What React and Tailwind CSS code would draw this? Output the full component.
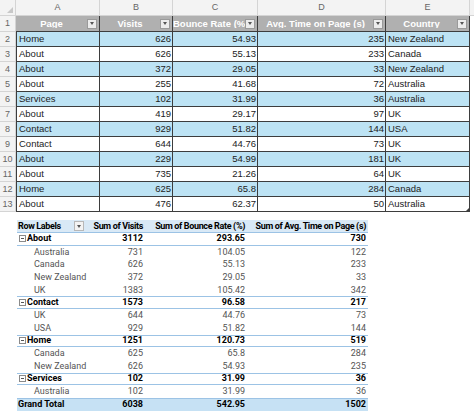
const rows = [
  ["Home", 626, "54.93", 235, "New Zealand"],
  ["About", 626, "55.13", 233, "Canada"],
  ["About", 372, "29.05", 33, "New Zealand"],
  ["About", 255, "41.68", 72, "Australia"],
  ["Services", 102, "31.99", 36, "Australia"],
  ["About", 419, "29.17", 97, "UK"],
  ["Contact", 929, "51.82", 144, "USA"],
  ["Contact", 644, "44.76", 73, "UK"],
  ["About", 229, "54.99", 181, "UK"],
  ["About", 735, "21.26", 64, "UK"],
  ["Home", 625, "65.8", 284, "Canada"],
  ["About", 476, "62.37", 50, "Australia"],
];

const pivot = [
  { label: "About", v: 3112, b: "293.65", t: 730, group: true },
  { label: "Australia", v: 731, b: "104.05", t: 122 },
  { label: "Canada", v: 626, b: "55.13", t: 233 },
  { label: "New Zealand", v: 372, b: "29.05", t: 33 },
  { label: "UK", v: 1383, b: "105.42", t: 342 },
  { label: "Contact", v: 1573, b: "96.58", t: 217, group: true },
  { label: "UK", v: 644, b: "44.76", t: 73 },
  { label: "USA", v: 929, b: "51.82", t: 144 },
  { label: "Home", v: 1251, b: "120.73", t: 519, group: true },
  { label: "Canada", v: 625, b: "65.8", t: 284 },
  { label: "New Zealand", v: 626, b: "54.93", t: 235 },
  { label: "Services", v: 102, b: "31.99", t: 36, group: true },
  { label: "Australia", v: 102, b: "31.99", t: 36 },
];

const cols = "grid grid-cols-[16px_84px_73px_85px_128px_84px_4px]";
const pcols = "grid grid-cols-[68px_60px_102px_121px]";

const Drop = ({ light }) => (
  <span
    className={
      "w-[10px] h-[10px] shrink-0 flex items-center justify-center border " +
      (light ? "bg-[#f3f3f3] border-[#b8b8b8]" : "bg-[#ececec] border-[#9a9a9a]")
    }
  >
    <span className="w-0 h-0 border-l-[2.5px] border-r-[2.5px] border-t-[3px] border-l-transparent border-r-transparent border-t-[#555]"></span>
  </span>
);

const HeadCell = ({ children }) => (
  <div className="flex items-center bg-[#b0b0b0] border-r border-b border-[#3d3d3d] pr-[2px] overflow-hidden">
    <span className="flex-1 min-w-0 text-center text-white font-bold whitespace-nowrap overflow-hidden">{children}</span>
    <Drop />
  </div>
);

const MinusBox = () => (
  <span className="w-[7px] h-[7px] border border-[#8a8a8a] flex items-center justify-center mr-[1px] shrink-0 bg-white">
    <span className="w-[3px] h-px bg-[#555]"></span>
  </span>
);

export default function App() {
  return (
    <div className="w-[474px] h-[412px] bg-white overflow-hidden text-[9.5px] text-[#222] font-['Liberation_Sans',Arial,sans-serif] leading-none">
      {/* column letters */}
      <div className={cols + " h-[16px] bg-[#f3f3f3] text-[#666] text-[9px]"}>
        <div className="relative border-r border-b border-[#d4d4d4]">
          <span className="absolute right-[2px] bottom-[2px] w-0 h-0 border-b-[6px] border-l-[6px] border-b-[#c8c8c8] border-l-transparent"></span>
        </div>
        {["A", "B", "C", "D", "E"].map((c) => (
          <div key={c} className="flex items-center justify-center border-r border-b border-[#d4d4d4]">{c}</div>
        ))}
        <div className="border-b border-[#d4d4d4]"></div>
      </div>

      {/* header row */}
      <div className={cols + " h-[16px]"}>
        <div className="flex items-center justify-center bg-[#f3f3f3] text-[#666] text-[9px] border-r border-b border-[#d4d4d4]">1</div>
        <HeadCell>Page</HeadCell>
        <HeadCell>Visits</HeadCell>
        <HeadCell>Bounce Rate (%</HeadCell>
        <HeadCell>Avg. Time on Page (s)</HeadCell>
        <HeadCell>Country</HeadCell>
        <div></div>
      </div>

      {rows.map((r, i) => {
        const bg = i % 2 === 0 ? "bg-[#bde3f4]" : "bg-white";
        const cell = "flex items-center border-r border-b border-[#3d3d3d] whitespace-nowrap overflow-hidden " + bg;
        return (
          <div key={i} className={cols + " h-[15px]"}>
            <div className="flex items-center justify-center bg-[#f3f3f3] text-[#666] text-[9px] border-r border-b border-[#d4d4d4]">{i + 2}</div>
            <div className={cell + " pl-[2px] border-l"}>{r[0]}</div>
            <div className={cell + " justify-end pr-[1px]"}>{r[1]}</div>
            <div className={cell + " justify-end pr-[1px]"}>{r[2]}</div>
            <div className={cell + " justify-end pr-[1px]"}>{r[3]}</div>
            <div className={cell + " pl-[2px] relative"}>
              {r[4]}
              {i === rows.length - 1 && (
                <span className="absolute right-0 bottom-0 w-0 h-0 border-b-[3px] border-l-[3px] border-b-[#3d3d3d] border-l-transparent"></span>
              )}
            </div>
            <div></div>
          </div>
        );
      })}

      {/* pivot table */}
      <div className="flex mt-[8px]">
        <div className="w-[17px] shrink-0"></div>
        <div className="w-[351px] text-[9px] font-['Roboto','Liberation_Sans',Arial,sans-serif]">
          <div className={pcols + " h-[13px] bg-[#d9e9f6] font-bold text-black border-b border-[#9cc3e5] tracking-[-0.35px]"}>
            <div className="flex items-center pl-[1px] pr-[1px]">
              <span className="flex-1">Row Labels</span>
              <Drop light />
            </div>
            <div className="flex items-center justify-end pr-[2px] whitespace-nowrap">Sum of Visits</div>
            <div className="flex items-center justify-end pr-[2px] whitespace-nowrap">Sum of Bounce Rate (%)</div>
            <div className="flex items-center justify-end pr-[2px] whitespace-nowrap">Sum of Avg. Time on Page (s)</div>
          </div>
          {pivot.map((p, i) => (
            <div
              key={i}
              className={
                pcols + " h-[12.7px] " +
                (p.group ? "font-bold text-black border-b border-[#9cc3e5]" : "text-[#555]") +
                (p.group && i > 0 ? " border-t border-t-[#9cc3e5]" : "")
              }
            >
              <div className={"flex items-center whitespace-nowrap " + (p.group ? "pl-[2px]" : "pl-[17px]")}>
                {p.group && <MinusBox />}
                {p.label}
              </div>
              <div className="flex items-center justify-end pr-[2px]">{p.v}</div>
              <div className="flex items-center justify-end pr-[2px]">{p.b}</div>
              <div className="flex items-center justify-end pr-[2px]">{p.t}</div>
            </div>
          ))}
          <div className={pcols + " h-[13px] bg-[#c6e1f4] font-bold text-black border-t border-[#9cc3e5]"}>
            <div className="flex items-center pl-[1px] whitespace-nowrap">Grand Total</div>
            <div className="flex items-center justify-end pr-[2px]">6038</div>
            <div className="flex items-center justify-end pr-[2px]">542.95</div>
            <div className="flex items-center justify-end pr-[2px]">1502</div>
          </div>
        </div>
      </div>
    </div>
  );
}
